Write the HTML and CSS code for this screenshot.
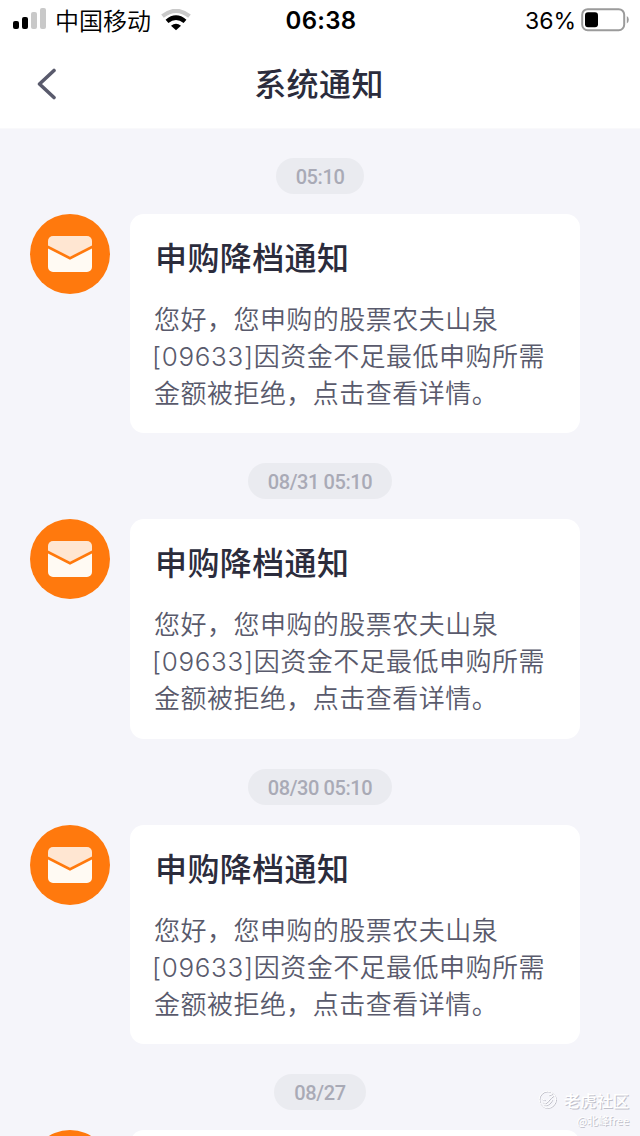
FILE: index.html
```
<!DOCTYPE html>
<html lang="zh-CN">
<head>
<meta charset="utf-8">
<title>系统通知</title>
<link rel="stylesheet" href="styles.css">
</head>
<body>
<svg class="defs" width="0" height="0" aria-hidden="true">
  <symbol id="mail" viewBox="0 0 80 80">
    <circle cx="40" cy="40" r="40" fill="#ff790d"/>
    <path d="M18 31.500V27a5 5 0 0 1 5-5h34a5 5 0 0 1 5 5v4.500L40 42.700z" fill="#ffe6d2"/>
    <path d="M18 34.500 40 45.700 62 34.500V53a5 5 0 0 1-5 5H23a5 5 0 0 1-5-5z" fill="#fffaf3"/>
  </symbol>
</svg>
<div class="screen">
  <header class="top">
    <div class="status">
      <div class="status-left">
        <svg class="signal" width="34" height="22" viewBox="0 0 34 22">
          <rect x="0" y="13" width="6" height="8" rx="2"/>
          <rect x="9" y="9" width="6" height="12" rx="2"/>
          <rect class="dim" x="18" y="4" width="6" height="17" rx="2"/>
          <rect class="dim" x="27" y="0" width="6" height="21" rx="2"/>
        </svg>
        <span class="carrier">中国移动</span>
        <svg class="wifi" width="30" height="22" viewBox="0 0 30 22">
          <path d="M1.500 7.200Q15-3.500 28.500 7.200" fill="none" stroke="#c9c9c9" stroke-width="4.200"/>
          <path d="M6 12.400Q15 4.800 24 12.400" fill="none" stroke="#000" stroke-width="4.400"/>
          <path d="M10 16.800Q15 12.600 20 16.800L15 21.300z"/>
        </svg>
      </div>
      <span class="clock">06:38</span>
      <div class="status-right">
        <span class="percent">36%</span>
        <svg class="battery" width="48" height="24" viewBox="0 0 48 24">
          <rect x="1.200" y="1.200" width="42" height="21" rx="5.500" fill="#fff" stroke="#9b9b9b" stroke-width="2"/>
          <rect x="4" y="4.200" width="13" height="15" rx="3"/>
          <path d="M45.800 8q2 1 2 3.700t-2 3.800z" fill="#9b9b9b"/>
        </svg>
      </div>
    </div>
    <nav class="nav">
      <svg class="back" width="20" height="32" viewBox="0 0 20 32"><path d="M17 2.500 2.500 16 17 29.500" fill="none" stroke="#595a6c" stroke-width="3.600" stroke-linecap="round" stroke-linejoin="round"/></svg>
      <h1 class="nav-title">系统通知</h1>
    </nav>
  </header>
  <main class="feed">
    <time class="stamp">05:10</time>
    <section class="row">
      <svg class="avatar"><use href="#mail"/></svg>
      <article class="card">
        <h2 class="card-title">申购降档通知</h2>
        <p class="card-text">您好，您申购的股票农夫山泉<br><span class="code">[09633]</span>因资金不足最低申购所需<br>金额被拒绝，点击查看详情。</p>
      </article>
    </section>
    <time class="stamp">08/31 05:10</time>
    <section class="row">
      <svg class="avatar"><use href="#mail"/></svg>
      <article class="card">
        <h2 class="card-title">申购降档通知</h2>
        <p class="card-text">您好，您申购的股票农夫山泉<br><span class="code">[09633]</span>因资金不足最低申购所需<br>金额被拒绝，点击查看详情。</p>
      </article>
    </section>
    <time class="stamp">08/30 05:10</time>
    <section class="row">
      <svg class="avatar"><use href="#mail"/></svg>
      <article class="card">
        <h2 class="card-title">申购降档通知</h2>
        <p class="card-text">您好，您申购的股票农夫山泉<br><span class="code">[09633]</span>因资金不足最低申购所需<br>金额被拒绝，点击查看详情。</p>
      </article>
    </section>
    <time class="stamp">08/27</time>
    <section class="row">
      <svg class="avatar"><use href="#mail"/></svg>
      <article class="card"></article>
    </section>
  </main>
  <div class="watermark">
    <div class="brand">
      <svg width="20" height="20" viewBox="0 0 20 20" fill="none" stroke-linecap="round">
        <g stroke="#bcbcc6" transform="translate(.6 .6)"><circle cx="9.500" cy="9.500" r="8.300"/><path d="M4 12q3 3 6-1t5-5M6 15q5 1 8-5M4 9l3 1M11 5l3-1"/></g>
        <g stroke="#fff"><circle cx="9.500" cy="9.500" r="8.300"/><path d="M4 12q3 3 6-1t5-5M6 15q5 1 8-5M4 9l3 1M11 5l3-1"/></g>
      </svg>
      <span>老虎社区</span>
    </div>
    <span class="author">@北峰free</span>
  </div>
</div>
</body>
</html>
```
FILE: styles.css
```
* { box-sizing: border-box; }
body { margin: 0; background: #f5f5fa; font-family: "Noto Sans CJK SC", sans-serif; }
.defs { position: absolute; }
.screen { position: relative; width: 640px; height: 1136px; overflow: hidden; }
.top { height: 129px; background: #fff; border-bottom: 1px solid #f9f9fb; }
.status { display: grid; grid-template-columns: 1fr auto 1fr; align-items: center; height: 40px; padding: 0 11px 0 13px; color: #000; }
.status-left, .status-right { display: flex; align-items: center; }
.signal .dim { fill: #c9c9c9; }
.signal { margin-top: -3px; }
.carrier { margin: -2px 0 0 8px; font-size: 24px; font-weight: 350; line-height: 40px; white-space: nowrap; }
.wifi { margin: -2px 0 0 10px; }
.clock { padding-top: 1px; font: 600 24px/40px Inter, sans-serif; letter-spacing: .3px; }
.status-right { justify-content: flex-end; gap: 5px; }
.percent { font: 400 23px/40px Inter, sans-serif; letter-spacing: 0; }
.battery { margin-top: -2px; }
.nav { display: grid; grid-template-columns: 1fr auto 1fr; align-items: center; height: 88px; padding: 0 37px; }
.nav-title { grid-column: 2; margin: -4px 0 0 -2px; font-size: 32px; font-weight: 500; line-height: 48px; letter-spacing: .4px; color: #2b2c3c; }
.feed { display: flex; flex-direction: column; align-items: center; padding-top: 29px; }
.stamp { flex: none; height: 36px; padding: 0 20px; border-radius: 18px; background: #eaebf0; color: #a9aab6; font: 500 20px/38px Roboto, sans-serif; letter-spacing: -.4px; }
.row { display: flex; flex: none; align-items: flex-start; gap: 20px; width: 640px; margin: 20px 0 30px; padding: 0 60px 0 30px; }
.avatar { flex: none; width: 80px; height: 80px; }
.card { flex: 1; height: 219.3px; padding: 18px 24px; border-radius: 14px; background: #fff; }
.card-title { margin: 0 0 0 1px; font-size: 32px; font-weight: 500; line-height: 48px; letter-spacing: .4px; color: #2b2c3c; }
.card-text { margin: 19px 0 0; font-size: 26px; font-weight: 350; line-height: 37px; letter-spacing: .47px; white-space: nowrap; color: #595a6c; }
.code { margin-left: -2px; font-family: Inter, sans-serif; font-weight: 300; line-height: 1; letter-spacing: .68px; }
.watermark { position: absolute; right: 11px; bottom: 7px; display: flex; flex-direction: column; align-items: flex-end; color: #fff; text-shadow: 1px 1px 0 #c0c0ca; }
.brand { display: flex; align-items: center; gap: 6px; font-size: 16.3px; line-height: 22px; font-weight: 500; }
.author { font-size: 11px; line-height: 18px; }
```
